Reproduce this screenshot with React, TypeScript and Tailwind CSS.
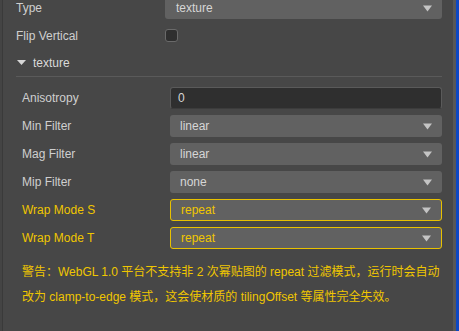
const FONT = { fontFamily: '"Liberation Sans", Arial, "Noto Sans CJK SC", sans-serif' };

function Arrow({ className = "" }: { className?: string }) {
  return (
    <svg width="9" height="7" viewBox="0 0 9 7" className={className}>
      <path d="M0 0.5 H9 L4.5 6.5 Z" fill="#c4c4c4" />
    </svg>
  );
}

function Select({ value, warn = false }: { value: string; warn?: boolean }) {
  return (
    <div
      className={
        "flex h-[22px] flex-1 items-center justify-between rounded-[3px] bg-[#616161] pl-[10px] pr-[10px] " +
        (warn ? "border border-[#e8c100] text-[#f0c600] pl-[9px]" : "text-[#d6d6d6]")
      }
    >
      <span>{value}</span>
      <Arrow />
    </div>
  );
}

function Row({ label, children, warn = false }: { label: string; children: React.ReactNode; warn?: boolean }) {
  return (
    <div className="flex h-[28px] items-center">
      <div className={"w-[148px] shrink-0 " + (warn ? "text-[#f0c600]" : "text-[#cfcfcf]")}>{label}</div>
      {children}
    </div>
  );
}

export default function App() {
  return (
    <div className="flex h-[331px] w-[459px] overflow-hidden bg-[#474747] text-[12px]" style={FONT}>
      <div className="w-[2px] shrink-0 bg-[#444444]" />
      <div className="w-px shrink-0 bg-[#3a3a3a]" />
      <div className="flex min-w-0 flex-1 flex-col">
        <div className="mt-[-6px] pl-[13px] pr-[11px]">
          <div className="flex h-[28px] items-center">
            <div className="w-[149px] shrink-0 text-[#cfcfcf]">Type</div>
            <div className="flex h-[22px] flex-1 items-center justify-between rounded-[3px] bg-[#616161] pl-[11px] pr-[10px] text-[#d6d6d6]">
              <span>texture</span>
              <Arrow />
            </div>
          </div>
          <div className="flex h-[27px] items-center">
            <div className="w-[149px] shrink-0 text-[#cfcfcf]">Flip Vertical</div>
            <div className="h-[13px] w-[13px] rounded-[3px] border border-[#6a6a6a] bg-[#2f2f2f]" />
          </div>
          <div className="flex h-[28px] items-center gap-[7px] border-b border-[#5a5a5a] pl-px text-[#dadada]">
            <svg width="9" height="6" viewBox="0 0 9 6">
              <path d="M0 0 H9 L4.5 5 Z" fill="#d6d6d6" />
            </svg>
            <span>texture</span>
          </div>
        </div>
        <div className="pl-[19px] pr-[11px] pt-[7px]">
          <Row label="Anisotropy">
            <div className="flex h-[22px] flex-1 items-center rounded-[3px] border border-[#5a5a5a] border-b-[#3c3c3c] bg-[#2f2f2f] pl-[7px] text-[#d6d6d6]">
              0
            </div>
          </Row>
          <Row label="Min Filter">
            <Select value="linear" />
          </Row>
          <Row label="Mag Filter">
            <Select value="linear" />
          </Row>
          <Row label="Mip Filter">
            <Select value="none" />
          </Row>
          <Row label="Wrap Mode S" warn>
            <Select value="repeat" warn />
          </Row>
          <Row label="Wrap Mode T" warn>
            <Select value="repeat" warn />
          </Row>
        </div>
        <div className="mt-[8px] whitespace-nowrap pl-[19px] leading-[25px] text-[#f0c600]">
          警告：WebGL 1.0 平台不支持非 2 次幂贴图的 repeat 过滤模式，运行时会自动
          <br />
          改为 clamp-to-edge 模式，这会使材质的 tilingOffset 等属性完全失效。
        </div>
      </div>
      <div className="w-[3px] shrink-0 bg-[#575757]" />
      <div className="w-[3px] shrink-0 bg-[#0d47c2]" />
    </div>
  );
}
